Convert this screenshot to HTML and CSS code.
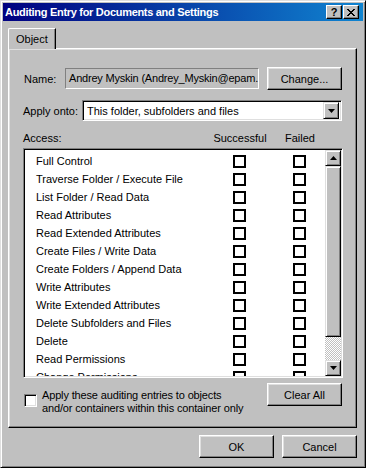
FILE: index.html
```html
<!DOCTYPE html>
<html lang="en">
<head>
    <meta charset="UTF-8">
    <title>Auditing Entry for Documents and Settings</title>
    <link rel="stylesheet" href="styles.css">
</head>
<body>
    <div class="window">
        <div class="titlebar">
            <span class="title">Auditing Entry for Documents and Settings</span>
            <div class="title-buttons">
                <button class="title-btn help-btn">?</button>
                <button class="title-btn close-btn">
                    <svg width="8" height="7" viewBox="0 0 8 7"><path d="M0 0h2v1h1v1h2V1h1V0h2v1H7v1H6v1H5v1h1v1h1v1h1v1H6V6H5V5H3v1H2v1H0V6h1V5h1V4h1V3H2V2H1V1H0z" fill="#000"/></svg>
                </button>
            </div>
        </div>

        <div class="content">
            <div class="tabs">
                <div class="tab active">Object</div>
            </div>

            <div class="panel">
                <div class="name-row">
                    <span class="field-label name-label">Name:</span>
                    <div class="readonly-field">Andrey Myskin (Andrey_Myskin@epam.</div>
                    <button class="btn change-btn">Change...</button>
                </div>

                <div class="apply-row">
                    <span class="field-label apply-label">Apply onto:</span>
                    <div class="combo">
                        <span class="combo-text">This folder, subfolders and files</span>
                        <span class="combo-arrow">
                            <svg width="7" height="4" viewBox="0 0 7 4"><path d="M0 0h7L3.5 4z" fill="#000"/></svg>
                        </span>
                    </div>
                </div>

                <div class="access-header">
                    <span>Access:</span>
                    <span class="col-head">Successful</span>
                    <span class="col-head">Failed</span>
                </div>

                <div class="listbox">
                    <div class="list-items">
                        <div class="list-row"><span>Full Control</span><i class="check"></i><i class="check"></i></div>
                        <div class="list-row"><span>Traverse Folder / Execute File</span><i class="check"></i><i class="check"></i></div>
                        <div class="list-row"><span>List Folder / Read Data</span><i class="check"></i><i class="check"></i></div>
                        <div class="list-row"><span>Read Attributes</span><i class="check"></i><i class="check"></i></div>
                        <div class="list-row"><span>Read Extended Attributes</span><i class="check"></i><i class="check"></i></div>
                        <div class="list-row"><span>Create Files / Write Data</span><i class="check"></i><i class="check"></i></div>
                        <div class="list-row"><span>Create Folders / Append Data</span><i class="check"></i><i class="check"></i></div>
                        <div class="list-row"><span>Write Attributes</span><i class="check"></i><i class="check"></i></div>
                        <div class="list-row"><span>Write Extended Attributes</span><i class="check"></i><i class="check"></i></div>
                        <div class="list-row"><span>Delete Subfolders and Files</span><i class="check"></i><i class="check"></i></div>
                        <div class="list-row"><span>Delete</span><i class="check"></i><i class="check"></i></div>
                        <div class="list-row"><span>Read Permissions</span><i class="check"></i><i class="check"></i></div>
                        <div class="list-row"><span>Change Permissions</span><i class="check"></i><i class="check"></i></div>
                    </div>
                    <div class="scrollbar">
                        <div class="scroll-btn">
                            <svg width="7" height="4" viewBox="0 0 7 4"><path d="M0 4h7L3.5 0z" fill="#000"/></svg>
                        </div>
                        <div class="scroll-thumb"></div>
                        <div class="scroll-track"></div>
                        <div class="scroll-btn">
                            <svg width="7" height="4" viewBox="0 0 7 4"><path d="M0 0h7L3.5 4z" fill="#000"/></svg>
                        </div>
                    </div>
                </div>

                <div class="bottom-row">
                    <label class="inherit-option">
                        <i class="checkbox"></i>
                        <span class="inherit-text">Apply these auditing entries to objects<br>and/or containers within this container only</span>
                    </label>
                    <button class="btn clear-btn">Clear All</button>
                </div>
            </div>

            <div class="footer">
                <button class="btn dialog-btn">OK</button>
                <button class="btn dialog-btn">Cancel</button>
            </div>
        </div>
    </div>
</body>
</html>
```

FILE: styles.css
```css
body {
    margin: 0;
    font-family: "Liberation Sans", Arial, sans-serif;
    font-size: 11px;
    color: #000;
    background-color: #c0c0c0;
}

.window {
    width: 366px;
    height: 468px;
    box-sizing: border-box;
    background-color: #c0c0c0;
    border: 1px solid;
    border-color: #dfdfdf #000 #000 #dfdfdf;
    box-shadow: inset 1px 1px #fff, inset -1px -1px #808080;
    padding: 2px;
    display: flex;
    flex-direction: column;
}

/* title bar */
.titlebar {
    height: 18px;
    flex-shrink: 0;
    display: flex;
    align-items: center;
    justify-content: space-between;
    padding: 0 4px 0 2px;
    background: linear-gradient(to right, #000080, #1084d0);
}

.title {
    color: #fff;
    font-weight: bold;
    font-size: 11px;
    letter-spacing: -0.3px;
    white-space: nowrap;
}

.title-buttons {
    display: flex;
}

.title-btn {
    width: 16px;
    height: 14px;
    padding: 0;
    margin: 0;
    box-sizing: border-box;
    background-color: #c0c0c0;
    border: 1px solid;
    border-color: #fff #000 #000 #fff;
    box-shadow: inset -1px -1px #808080;
    display: flex;
    align-items: center;
    justify-content: center;
    font-family: "Liberation Sans", Arial, sans-serif;
    font-weight: bold;
    font-size: 11px;
    line-height: 1;
}

.close-btn {
    margin-left: 1px;
}

.content {
    padding: 7px 6px 0 5px;
}

/* tabs */
.tabs {
    display: flex;
    position: relative;
    z-index: 1;
}

.tab {
    height: 21px;
    box-sizing: border-box;
    padding: 4px 7px 0 7px;
    margin-bottom: -1px;
    background-color: #c0c0c0;
    border-top: 1px solid #fff;
    border-left: 1px solid #fff;
    border-right: 1px solid #000;
    border-top-left-radius: 2px;
    box-shadow: inset -1px 0 #808080;
}

.panel {
    height: 380px;
    box-sizing: border-box;
    border: 1px solid;
    border-color: #fff #000 #000 #fff;
    box-shadow: inset -1px -1px #808080, inset 1px 1px #dfdfdf;
    padding: 18px 14px 0 14px;
}

.btn {
    height: 23px;
    box-sizing: border-box;
    padding: 0;
    background-color: #c0c0c0;
    border: 1px solid;
    border-color: #fff #000 #000 #fff;
    box-shadow: inset -1px -1px #808080, inset 1px 1px #dfdfdf;
    font-family: "Liberation Sans", Arial, sans-serif;
    font-size: 11px;
    color: #000;
}

.field-label {
    white-space: nowrap;
}

/* name row */
.name-row {
    display: flex;
    align-items: center;
    height: 23px;
}

.name-label {
    width: 41px;
    padding-left: 1px;
}

.readonly-field {
    width: 194px;
    height: 21px;
    box-sizing: border-box;
    border: 1px solid;
    border-color: #808080 #fff #fff #808080;
    padding: 3px 0 0 3px;
    letter-spacing: -0.2px;
    white-space: nowrap;
    overflow: hidden;
}

.change-btn {
    width: 75px;
    margin-left: 8px;
}

/* apply onto row */
.apply-row {
    display: flex;
    align-items: center;
    margin-top: 10px;
    height: 21px;
}

.apply-label {
    width: 59px;
}

.combo {
    width: 260px;
    height: 21px;
    box-sizing: border-box;
    background-color: #fff;
    border: 1px solid;
    border-color: #808080 #fff #fff #808080;
    box-shadow: inset 1px 1px #000, inset -1px -1px #dfdfdf;
    display: flex;
    align-items: center;
    justify-content: space-between;
    padding: 1px 2px 1px 4px;
}

.combo-arrow {
    width: 16px;
    height: 17px;
    box-sizing: border-box;
    background-color: #c0c0c0;
    border: 1px solid;
    border-color: #dfdfdf #000 #000 #dfdfdf;
    box-shadow: inset 1px 1px #fff, inset -1px -1px #808080;
    display: flex;
    align-items: center;
    justify-content: center;
}

/* access list */
.access-header {
    display: grid;
    grid-template-columns: 187px 60px 60px;
    margin-top: 10px;
    height: 14px;
    line-height: 14px;
}

.col-head {
    text-align: center;
}

.listbox {
    margin-top: 3px;
    width: 320px;
    height: 230px;
    box-sizing: border-box;
    background-color: #fff;
    border: 1px solid;
    border-color: #808080 #fff #fff #808080;
    box-shadow: inset 1px 1px #000, inset -1px -1px #dfdfdf;
    padding: 1px;
    display: flex;
    overflow: hidden;
}

.list-items {
    flex: 1;
    overflow: hidden;
    padding-top: 2px;
}

.list-row {
    display: grid;
    grid-template-columns: 197px 13px 47px 13px;
    align-items: center;
    height: 18px;
    padding-left: 11px;
}

.list-row span {
    white-space: nowrap;
}

.check {
    display: block;
    grid-column: 2;
    width: 13px;
    height: 13px;
    box-sizing: border-box;
    border: 2px solid #000;
    background-color: #fff;
}

.check + .check {
    grid-column: 4;
}

.scrollbar {
    width: 16px;
    display: flex;
    flex-direction: column;
}

.scroll-btn {
    height: 16px;
    flex-shrink: 0;
    box-sizing: border-box;
    background-color: #c0c0c0;
    border: 1px solid;
    border-color: #dfdfdf #000 #000 #dfdfdf;
    box-shadow: inset 1px 1px #fff, inset -1px -1px #808080;
    display: flex;
    align-items: center;
    justify-content: center;
}

.scroll-thumb {
    height: 171px;
    flex-shrink: 0;
    box-sizing: border-box;
    background-color: #c0c0c0;
    border: 1px solid;
    border-color: #dfdfdf #000 #000 #dfdfdf;
    box-shadow: inset 1px 1px #fff, inset -1px -1px #808080;
}

.scroll-track {
    flex: 1;
    background: repeating-conic-gradient(#c0c0c0 0 25%, #fff 0 50%) 0 0 / 2px 2px;
}

/* bottom row */
.bottom-row {
    display: flex;
    justify-content: space-between;
    align-items: flex-start;
    margin-top: 5px;
}

.inherit-option {
    display: flex;
    align-items: flex-start;
    flex-shrink: 0;
    margin-top: 6px;
    line-height: 13px;
}

.inherit-text {
    white-space: nowrap;
    letter-spacing: -0.15px;
}

.checkbox {
    display: block;
    width: 13px;
    height: 13px;
    flex-shrink: 0;
    box-sizing: border-box;
    margin: 5px 5px 0 1px;
    background-color: #fff;
    border: 1px solid;
    border-color: #808080 #fff #fff #808080;
    box-shadow: inset 1px 1px #000, inset -1px -1px #dfdfdf;
}

.clear-btn {
    width: 75px;
    flex-shrink: 0;
}

/* dialog buttons */
.footer {
    display: flex;
    justify-content: flex-end;
    gap: 8px;
    margin-top: 7px;
}

.dialog-btn {
    width: 75px;
}
```
